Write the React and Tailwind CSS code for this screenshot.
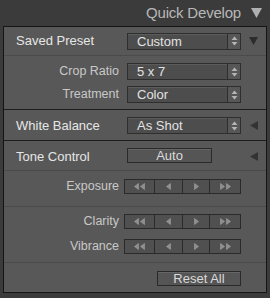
import React from 'react';

const FONT = { fontFamily: '"Liberation Sans", Arial, sans-serif' };

const Spinner = () => (
    <svg width="7" height="10" viewBox="0 0 7 10" className="block">
        <path d="M3.5 0.5 L6.5 4 L0.5 4 Z" fill="#b4b4b4" />
        <path d="M3.5 9.5 L6.5 6 L0.5 6 Z" fill="#b4b4b4" />
    </svg>
);

const Dropdown = ({ value }) => (
    <div className="flex w-[114px] h-[17px] border border-[#2e2e2e] bg-[#4d4d4d] shadow-[inset_0_1px_0_#5c5c5c]">
        <div className="flex-1 pl-[9px] text-[13px] leading-[15px] text-[#e2e2e2]">{value}</div>
        <div className="w-[13px] border-l border-[#2e2e2e] bg-[#575757] flex items-center justify-center">
            <Spinner />
        </div>
    </div>
);

const SideArrow = ({ dir }) => (
    <div className="w-[25px] flex justify-center">
        {dir === 'down' ? (
            <svg width="9" height="8" viewBox="0 0 9 8"><path d="M0 0 L9 0 L4.5 8 Z" fill="#2c2c2c" /></svg>
        ) : (
            <svg width="8" height="9" viewBox="0 0 8 9"><path d="M8 0 L8 9 L0 4.5 Z" fill="#333" /></svg>
        )}
    </div>
);

const Tri = ({ left }) => (
    <svg width="5" height="7" viewBox="0 0 5 7">
        {left
            ? <path d="M4.5 0.5 L4.5 6.5 L0.5 3.5 Z" fill="#8e8e8e" stroke="#a8a8a8" strokeWidth="0.5" />
            : <path d="M0.5 0.5 L0.5 6.5 L4.5 3.5 Z" fill="#8e8e8e" stroke="#a8a8a8" strokeWidth="0.5" />}
    </svg>
);

const Stepper = () => (
    <div className="flex h-[15px] ml-[5px] border border-[#2a2a2a] bg-[#505050]">
        <div className="w-[30px] flex items-center justify-center gap-[1px] border-r border-[#2a2a2a]"><Tri left /><Tri left /></div>
        <div className="w-[28px] flex items-center justify-center border-r border-[#2a2a2a]"><Tri left /></div>
        <div className="w-[27px] flex items-center justify-center border-r border-[#2a2a2a]"><Tri /></div>
        <div className="w-[30px] flex items-center justify-center gap-[1px]"><Tri /><Tri /></div>
    </div>
);

const SubRow = ({ label, children }) => (
    <div className="flex items-center">
        <div className="w-[115px] text-right text-[12.5px] text-[#c8c8c8] leading-none">{label}</div>
        {children}
    </div>
);

const Button = ({ label, w }) => (
    <div className={`${w} h-[15px] border border-[#2a2a2a] bg-[#555] shadow-[inset_0_1px_0_#666] text-center text-[13px] leading-[13px] text-[#dadada]`}>
        {label}
    </div>
);

export default function App() {
    return (
        <div className="w-[270px] h-[298px] bg-[#3b3b3b] overflow-hidden" style={FONT}>
            {/* Header */}
            <div className="h-[26px] flex items-center justify-end pr-[8px]">
                <span className="text-[15px] text-[#b8b8b8] tracking-[-0.2px]">Quick Develop</span>
                <svg width="11" height="10" viewBox="0 0 11 10" className="ml-[10px]"><path d="M0 0 L11 0 L5.5 10 Z" fill="#b0b0b0" /></svg>
            </div>

            {/* Panel */}
            <div className="ml-[3px] w-[264px] border border-[#151515] bg-[#585858]">
                {/* Saved Preset */}
                <div className="h-[28px] flex items-center">
                    <div className="w-[123px] pl-[12px] text-[13px] text-[#e6e6e6]">Saved Preset</div>
                    <Dropdown value="Custom" />
                    <SideArrow dir="down" />
                </div>
                <div className="border-t border-[#4b4b4b] pt-[7px] pb-[6px] flex flex-col gap-[6px]">
                    <SubRow label="Crop Ratio"><div className="ml-[8px]"><Dropdown value="5 x 7" /></div></SubRow>
                    <SubRow label="Treatment"><div className="ml-[8px]"><Dropdown value="Color" /></div></SubRow>
                </div>

                {/* White Balance */}
                <div className="border-t border-[#1e1e1e] h-[31px] pt-[7px] flex items-start">
                    <div className="w-[123px] pl-[12px] text-[13px] leading-[17px] text-[#e6e6e6]">White Balance</div>
                    <Dropdown value="As Shot" />
                    <div className="h-[17px] flex items-center"><SideArrow dir="left" /></div>
                </div>

                {/* Tone Control */}
                <div className="border-t border-[#1e1e1e] h-[30px] pt-[7px] flex items-start">
                    <div className="w-[123px] pl-[12px] text-[13px] leading-[17px] text-[#e6e6e6]">Tone Control</div>
                    <Button label="Auto" w="w-[85px]" />
                    <div className="w-[29px]" />
                    <div className="h-[17px] flex items-center"><SideArrow dir="left" /></div>
                </div>
                <div className="border-t border-[#4b4b4b] pt-[8px] pb-[12px]">
                    <SubRow label="Exposure"><Stepper /></SubRow>
                </div>
                <div className="border-t border-[#4b4b4b] pt-[7px] pb-[8px] flex flex-col gap-[10px]">
                    <SubRow label="Clarity"><Stepper /></SubRow>
                    <SubRow label="Vibrance"><Stepper /></SubRow>
                </div>
                <div className="border-t border-[#4b4b4b] pt-[8px] pb-[6px] pl-[153px]">
                    <Button label="Reset All" w="w-[84px]" />
                </div>
            </div>
        </div>
    );
}
